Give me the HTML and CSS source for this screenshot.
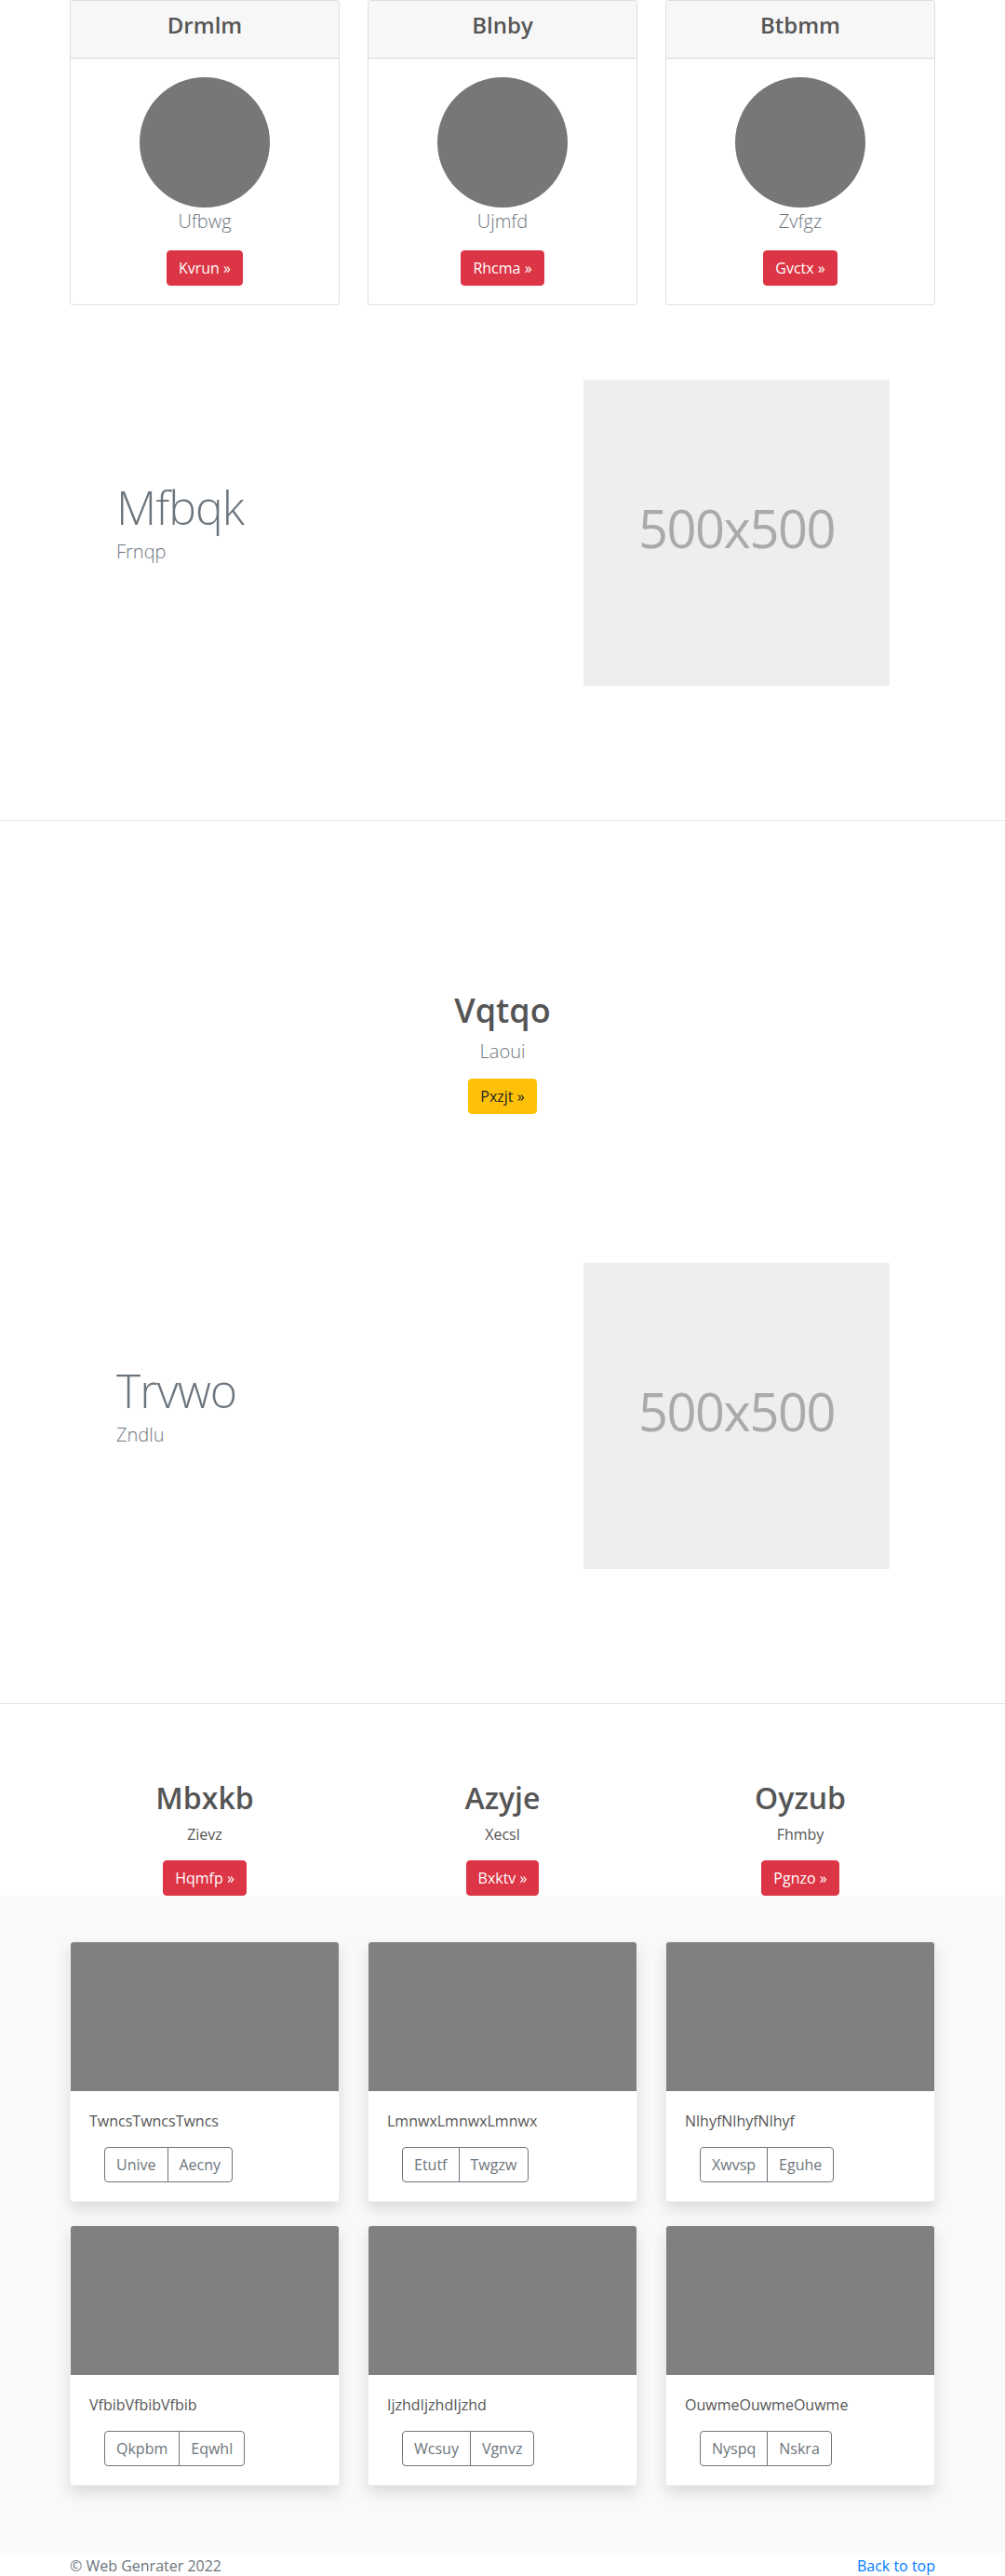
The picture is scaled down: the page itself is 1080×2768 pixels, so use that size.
FILE: index.html
```html
<!DOCTYPE html>
<html lang="en">
<head>
<meta charset="utf-8">
<title>Web Genrater</title>
<link rel="stylesheet" href="styles.css">
</head>
<body>

<section class="container top-cards">
  <div class="grid3">
    <div class="card">
      <div class="card-header"><h4 class="card-title">Drmlm</h4></div>
      <div class="card-body">
        <div class="avatar"></div>
        <p class="lead muted">Ufbwg</p>
        <a class="btn btn-danger" href="#">Kvrun &raquo;</a>
      </div>
    </div>
    <div class="card">
      <div class="card-header"><h4 class="card-title">Blnby</h4></div>
      <div class="card-body">
        <div class="avatar"></div>
        <p class="lead muted">Ujmfd</p>
        <a class="btn btn-danger" href="#">Rhcma &raquo;</a>
      </div>
    </div>
    <div class="card">
      <div class="card-header"><h4 class="card-title">Btbmm</h4></div>
      <div class="card-body">
        <div class="avatar"></div>
        <p class="lead muted">Zvfgz</p>
        <a class="btn btn-danger" href="#">Gvctx &raquo;</a>
      </div>
    </div>
  </div>
</section>

<section class="container featurette">
  <div class="feat-text">
    <h2 class="feat-heading">Mfbqk</h2>
    <p class="lead muted">Frnqp</p>
  </div>
  <svg class="placeholder" width="329" height="329" viewBox="0 0 329 329" role="img" aria-label="500x500">
    <rect width="100%" height="100%" fill="#eee"></rect>
    <text x="50%" y="50%" dy=".3em" text-anchor="middle" class="ph-text">500x500</text>
  </svg>
</section>

<hr class="divider">

<section class="container hero">
  <h2 class="hero-title">Vqtqo</h2>
  <p class="lead muted hero-lead">Laoui</p>
  <a class="btn btn-warning" href="#">Pxzjt &raquo;</a>
</section>

<section class="container featurette">
  <div class="feat-text">
    <h2 class="feat-heading">Trvwo</h2>
    <p class="lead muted">Zndlu</p>
  </div>
  <svg class="placeholder" width="329" height="329" viewBox="0 0 329 329" role="img" aria-label="500x500">
    <rect width="100%" height="100%" fill="#eee"></rect>
    <text x="50%" y="50%" dy=".3em" text-anchor="middle" class="ph-text">500x500</text>
  </svg>
</section>

<hr class="divider">

<section class="container columns">
  <div class="grid3">
    <div class="col">
      <h2 class="col-title">Mbxkb</h2>
      <p class="col-text">Zievz</p>
      <a class="btn btn-danger" href="#">Hqmfp &raquo;</a>
    </div>
    <div class="col">
      <h2 class="col-title">Azyje</h2>
      <p class="col-text">Xecsl</p>
      <a class="btn btn-danger" href="#">Bxktv &raquo;</a>
    </div>
    <div class="col">
      <h2 class="col-title">Oyzub</h2>
      <p class="col-text">Fhmby</p>
      <a class="btn btn-danger" href="#">Pgnzo &raquo;</a>
    </div>
  </div>
</section>

<section class="album">
  <div class="container">
    <div class="album-grid">
      <div class="acard">
        <div class="acard-img"></div>
        <div class="acard-body">
          <p class="acard-text">TwncsTwncsTwncs</p>
          <div class="btn-group"><a class="btn btn-outline" href="#">Unive</a><a class="btn btn-outline" href="#">Aecny</a></div>
        </div>
      </div>
      <div class="acard">
        <div class="acard-img"></div>
        <div class="acard-body">
          <p class="acard-text">LmnwxLmnwxLmnwx</p>
          <div class="btn-group"><a class="btn btn-outline" href="#">Etutf</a><a class="btn btn-outline" href="#">Twgzw</a></div>
        </div>
      </div>
      <div class="acard">
        <div class="acard-img"></div>
        <div class="acard-body">
          <p class="acard-text">NlhyfNlhyfNlhyf</p>
          <div class="btn-group"><a class="btn btn-outline" href="#">Xwvsp</a><a class="btn btn-outline" href="#">Eguhe</a></div>
        </div>
      </div>
      <div class="acard">
        <div class="acard-img"></div>
        <div class="acard-body">
          <p class="acard-text">VfbibVfbibVfbib</p>
          <div class="btn-group"><a class="btn btn-outline" href="#">Qkpbm</a><a class="btn btn-outline" href="#">Eqwhl</a></div>
        </div>
      </div>
      <div class="acard">
        <div class="acard-img"></div>
        <div class="acard-body">
          <p class="acard-text">IjzhdIjzhdIjzhd</p>
          <div class="btn-group"><a class="btn btn-outline" href="#">Wcsuy</a><a class="btn btn-outline" href="#">Vgnvz</a></div>
        </div>
      </div>
      <div class="acard">
        <div class="acard-img"></div>
        <div class="acard-body">
          <p class="acard-text">OuwmeOuwmeOuwme</p>
          <div class="btn-group"><a class="btn btn-outline" href="#">Nyspq</a><a class="btn btn-outline" href="#">Nskra</a></div>
        </div>
      </div>
    </div>
  </div>
</section>

<footer class="container footer">
  <p class="copy">&copy; Web Genrater 2022</p>
  <a class="back" href="#">Back to top</a>
</footer>

</body>
</html>
```

FILE: styles.css
```css
* { box-sizing: border-box; }

html, body {
  margin: 0;
  padding: 0;
}

body {
  font-family: "Segoe UI", "Open Sans", "Noto Sans", "Liberation Sans", sans-serif;
  font-size: 16px;
  line-height: 1.5;
  color: #555;
  background: #fff;
}

p { margin: 0 0 16px; }
h2, h4 { margin: 0 0 8px; line-height: 1.2; }

.container {
  width: 930px;
  margin: 0 auto;
}

.grid3 {
  display: grid;
  grid-template-columns: repeat(3, 290px);
  column-gap: 30px;
}

.lead {
  font-size: 20px;
  line-height: 30px;
  font-weight: 300;
}

.muted { color: #6c757d; }

/* buttons */
.btn {
  display: inline-block;
  font-size: 16px;
  line-height: 24px;
  padding: 6px 12px;
  border: 1px solid transparent;
  border-radius: 4px;
  text-decoration: none;
  text-align: center;
  white-space: nowrap;
}
.btn-danger { background: #dc3545; border-color: #dc3545; color: #fff; }
.btn-warning { background: #ffc107; border-color: #ffc107; color: #212529; }
.btn-outline { background: transparent; border-color: #6c757d; color: #6c757d; }

/* top cards */
.card {
  border: 1px solid rgba(0, 0, 0, .125);
  border-radius: 4px;
  background: #fff;
  overflow: hidden;
}
.card-header {
  background: #f7f7f7;
  border-bottom: 1px solid rgba(0, 0, 0, .125);
  padding: 12px 20px;
  text-align: center;
}
.card-title {
  font-size: 24px;
  font-weight: 600;
  color: #555;
}
.card-body {
  padding: 20px;
  display: flex;
  flex-direction: column;
  align-items: center;
}
.avatar {
  width: 140px;
  height: 140px;
  border-radius: 50%;
  background: #777;
}

/* featurettes */
.featurette {
  display: flex;
  align-items: center;
  padding: 80px 49px 144px 50px;
}
.feat-text { flex: 1; }
.feat-heading {
  font-size: 50px;
  line-height: 1;
  font-weight: 300;
  letter-spacing: -1px;
  color: #6c757d;
}
.placeholder {
  display: block;
  flex: none;
}
.ph-text {
  fill: #aaa;
  font-size: 56px;
  letter-spacing: -1.5px;
  font-family: "Segoe UI", "Open Sans", "Noto Sans", sans-serif;
}

.divider {
  margin: 0;
  border: 0;
  border-top: 1px solid #e5e5e5;
  height: 0;
}

/* hero */
.hero {
  display: flex;
  flex-direction: column;
  align-items: center;
  padding: 182px 0 80px;
  text-align: center;
}
.hero-title {
  font-size: 36px;
  font-weight: 600;
  color: #555;
}
.hero-lead { margin-bottom: 14px; }

/* three columns */
.columns { padding-top: 82px; }
.col {
  display: flex;
  flex-direction: column;
  align-items: center;
  text-align: center;
}
.col-title {
  font-size: 32px;
  font-weight: 600;
  color: #555;
}
.col-text { color: #555; }

/* album */
.album {
  background: #f8f9fa;
  padding: 49px 0 72px;
}
.album-grid {
  display: grid;
  grid-template-columns: repeat(3, 290px);
  column-gap: 30px;
  row-gap: 25px;
}
.acard {
  background: #fff;
  border: 1px solid rgba(0, 0, 0, .06);
  border-radius: 4px;
  overflow: hidden;
  box-shadow: 0 8px 16px rgba(0, 0, 0, .12);
}
.acard-img {
  height: 160px;
  background: #808080;
}
.acard-body { padding: 20px; }
.acard-text { color: #555; }
.btn-group {
  display: inline-flex;
  margin-left: 16px;
}
.btn-group .btn:first-child {
  border-top-right-radius: 0;
  border-bottom-right-radius: 0;
}
.btn-group .btn + .btn {
  margin-left: -1px;
  border-top-left-radius: 0;
  border-bottom-left-radius: 0;
}

/* footer */
.footer {
  display: flex;
  justify-content: space-between;
  padding-top: 2px;
}
.copy { color: #6c757d; margin: 0; }
.back { color: #007bff; text-decoration: none; }
```
